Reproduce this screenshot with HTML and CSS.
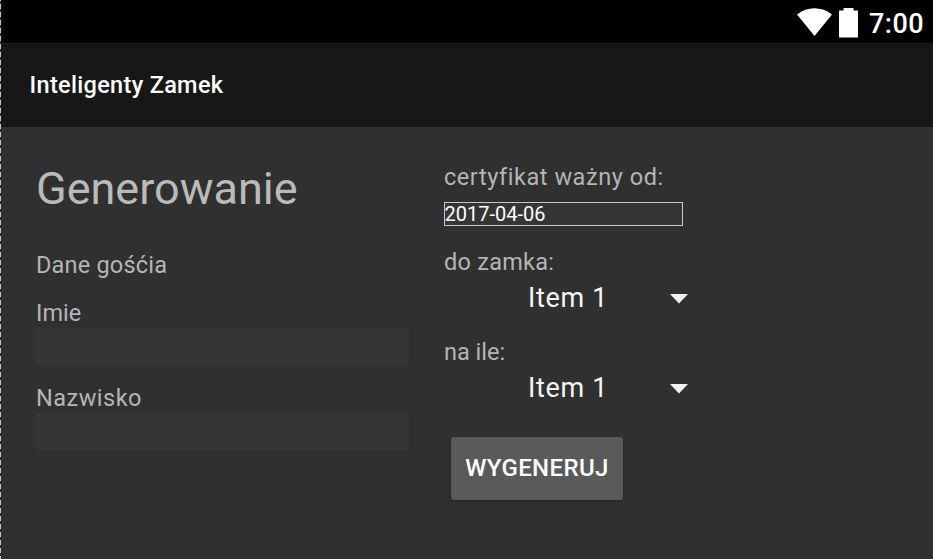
FILE: index.html
```html
<!DOCTYPE html>
<html lang="pl">
<head>
<meta charset="utf-8">
<title>Inteligenty Zamek</title>
<link rel="stylesheet" href="styles.css">
</head>
<body>
<div class="screen">
  <header class="status">
    <svg class="wifi" width="36" height="28" viewBox="0 0 36 28"><path d="M0 6.500C10 -1.700 25 -1.700 35 6.500L17.500 28Z" fill="#fff"/></svg>
    <svg class="battery" width="19" height="30" viewBox="0 0 19 30"><path d="M0 2.500H4.500V0H14.500V2.500H19V29.500H0Z" fill="#fff"/></svg>
    <span class="time">7:00</span>
  </header>
  <div class="appbar"><h1 class="title">Inteligenty Zamek</h1></div>
  <main class="content">
    <section class="guest">
      <h2 class="heading"><span>Generowanie</span></h2>
      <p class="label subtitle"><span>Dane gośćia</span></p>
      <label class="label" for="first"><span>Imie</span></label>
      <input class="field" id="first" type="text">
      <label class="label second" for="last"><span>Nazwisko</span></label>
      <input class="field" id="last" type="text">
    </section>
    <section class="certificate">
      <label class="label wide" for="date"><span>certyfikat ważny od:</span></label>
      <input class="date" id="date" type="text" value="2017-04-06">
      <p class="label lock"><span>do zamka:</span></p>
      <div class="spinner"><span>Item 1</span><svg width="18" height="10" viewBox="0 0 18 10"><path d="M0 0H18L9 9.500Z" fill="#f2f2f2"/></svg></div>
      <p class="label period"><span>na ile:</span></p>
      <div class="spinner"><span>Item 1</span><svg width="18" height="10" viewBox="0 0 18 10"><path d="M0 0H18L9 9.500Z" fill="#f2f2f2"/></svg></div>
      <button class="generate" type="button"><span>WYGENERUJ</span></button>
    </section>
    <hr class="trace">
  </main>
</div>
</body>
</html>
```
FILE: styles.css
```css
* { box-sizing: border-box; }
body { margin: 0; background: #303030; font-family: Roboto, sans-serif; }
h1, h2, p { margin: 0; font-weight: 400; }
.screen {
  position: relative;
  width: 933px;
  height: 559px;
  overflow: hidden;
  background: #303030;
}
.screen::before {
  content: "";
  position: absolute;
  left: 0;
  top: 0;
  width: 1px;
  height: 100%;
  background: repeating-linear-gradient(#c8c8c8 0 1px, #303030 1px 4px, #c8c8c8 4px 8px);
}
.status {
  display: flex;
  height: 43px;
  padding: 8px 0 0 797px;
  background: #000;
}
.battery { margin-left: 6px; flex: none; }
.wifi { flex: none; }
.time {
  margin-left: 11px;
  color: #fff;
  font-size: 27px;
  font-weight: 500;
  line-height: 33px;
  letter-spacing: 0.5px;
}
.appbar {
  display: flex;
  align-items: center;
  height: 84px;
  padding-left: 29.5px;
  background: #171717;
}
.title { color: #fff; font-size: 23.5px; font-weight: 500; line-height: 28px; letter-spacing: 0.32px; }
.content { display: flex; padding: 35px 0 0 36px; }
.guest { width: 373px; display: flex; flex-direction: column; }
.heading { height: 52px; color: #bababa; font-size: 45px; line-height: 54px; }
.label { display: block; color: #b5b5b5; font-size: 23.5px; line-height: 28px; }
.subtitle { margin: 38px 0 20px; letter-spacing: 0.2px; }
.guest .label { height: 28px; line-height: 26px; }
.second { margin-top: 20px; letter-spacing: 0.5px; }
.field {
  width: 373px;
  height: 37px;
  padding: 0;
  border: 0;
  background: #353535;
}
.certificate { width: 244px; margin-left: 35px; }
.wide { margin-top: 1px; letter-spacing: 0.55px; white-space: nowrap; }
.date {
  display: block;
  width: 239px;
  height: 24px;
  margin-top: 11px;
  padding: 0;
  border: 1px solid #c5c5c5;
  border-radius: 0;
  background: #353535;
  color: #fff;
  font: 20px Roboto, sans-serif;
  text-indent: -0.5px;
}
.lock { margin-top: 22px; letter-spacing: 0.25px; }
.period { margin-top: 18px; }
.spinner {
  display: flex;
  align-items: center;
  justify-content: space-between;
  height: 44px;
  padding-left: 84px;
  color: #f5f5f5;
  font-size: 27px;
  line-height: 32px;
  letter-spacing: 0.7px;
}
.spinner svg { margin-top: 2px; }
.generate {
  display: block;
  width: 172px;
  height: 63px;
  margin: 27px 0 0 7px;
  padding: 0 0 2px;
  border: 0;
  border-radius: 3px;
  background: #5a5a5b;
  box-shadow: 0 1px 2px #222;
  color: #fff;
  font: 500 24px Roboto, sans-serif;
  letter-spacing: 0.4px;
}
.trace {
  width: 51px;
  height: 1px;
  margin: 30px 0 0 80px;
  border: 0;
  background: #353535;
}
```
